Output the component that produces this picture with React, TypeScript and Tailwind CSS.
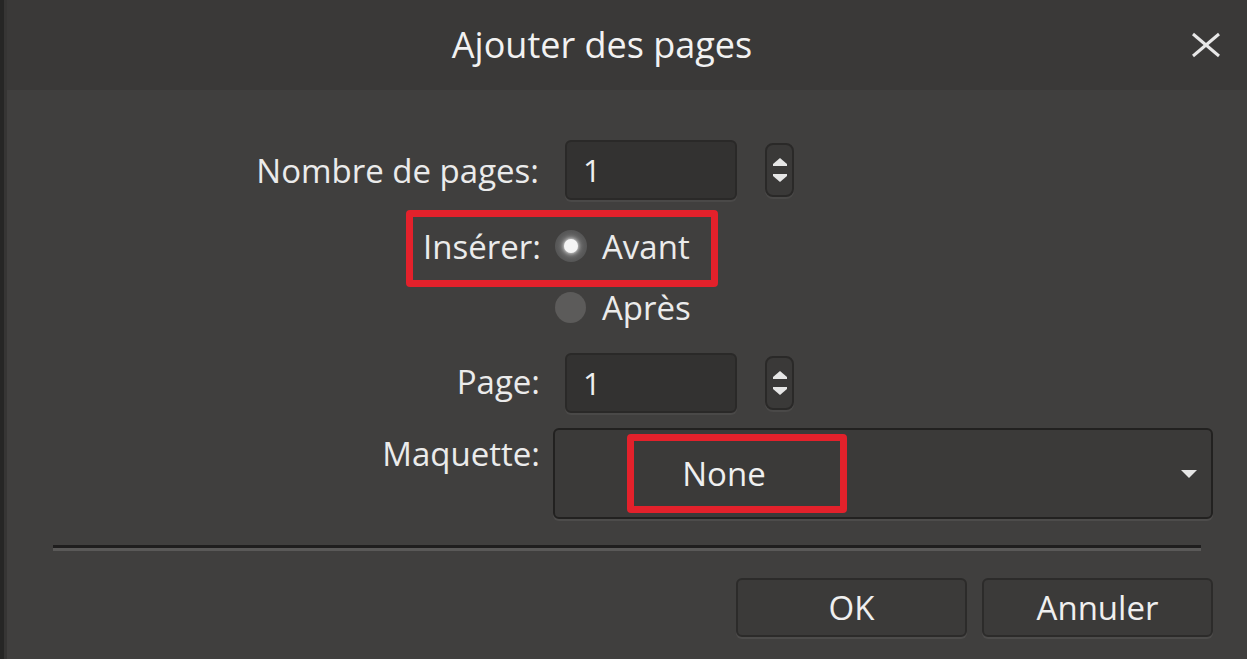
import React from "react";

function Spinner() {
  return (
    <div className="ml-[28px] mt-[3px] flex h-[54px] w-[29px] flex-col items-center justify-center gap-[8px] rounded-[8px] border-2 border-[#2a2928] bg-[#3a3938] shadow-[0_2px_0_#4a4948]">
      <svg width="14" height="8" viewBox="0 0 14 8">
        <polygon points="7,0 14,6 0,6" fill="#e6e6e6" />
        <rect x="0" y="6" width="14" height="2" fill="#e6e6e6" />
      </svg>
      <svg width="14" height="8" viewBox="0 0 14 8">
        <rect x="0" y="0" width="14" height="2" fill="#e6e6e6" />
        <polygon points="0,2 14,2 7,8" fill="#e6e6e6" />
      </svg>
    </div>
  );
}

function NumberInput({ value }: { value: string }) {
  return (
    <div className="flex h-[60px] w-[172px] items-center rounded-[6px] border-2 border-[#2a2928] bg-[#333231] pl-[16px] shadow-[0_2px_0_#4a4948]">
      <span className="text-[31px] leading-none text-[#efefef]">{value}</span>
    </div>
  );
}

export default function App() {
  return (
    <div
      className="relative h-[659px] w-[1247px] overflow-hidden bg-[#403f3e] text-[#ebebeb]"
      style={{ fontFamily: '"Open Sans", "Noto Sans", sans-serif' }}
    >
      <div className="flex h-full">
        <div className="w-[4px] bg-[#262625]" />
        <div className="w-[3px] bg-[#363534]" />
        <div className="flex flex-1 flex-col">
          {/* Title bar */}
          <div className="flex h-[90px] items-center bg-[#3a3938]">
            <div className="flex flex-1 justify-center pl-[8px]">
              <span className="text-[36px] leading-none text-[#f2f2f2]">Ajouter des pages</span>
            </div>
            <div className="mr-[24px] flex h-[30px] w-[34px] items-center justify-center">
              <svg width="32" height="26" viewBox="0 0 32 26">
                <line x1="3" y1="2" x2="29" y2="24" stroke="#e8e8e8" strokeWidth="3" />
                <line x1="29" y1="2" x2="3" y2="24" stroke="#e8e8e8" strokeWidth="3" />
              </svg>
            </div>
          </div>

          {/* Body */}
          <div className="flex flex-col">
            {/* Row 1 */}
            <div className="mt-[50px] flex h-[60px] items-start">
              <div className="flex h-[60px] w-[532px] items-center justify-end">
                <span className="text-[33px] leading-none">Nombre de pages:</span>
              </div>
              <div className="ml-[26px] flex items-start">
                <NumberInput value="1" />
                <Spinner />
              </div>
            </div>

            {/* Row 2 */}
            <div className="relative mt-[28px] flex h-[36px] items-center">
              <div className="flex w-[534px] justify-end">
                <span className="text-[33px] leading-none">Insérer:</span>
              </div>
              <div className="ml-[14px] flex items-center">
                <div className="flex h-[32px] w-[32px] items-center justify-center rounded-full bg-[radial-gradient(circle,#8a8a8a_0%,#5a5a5a_60%,#4a4a4a_100%)]">
                  <div className="h-[14px] w-[14px] rounded-full bg-[#f4f4f4] shadow-[0_0_4px_#ffffff]" />
                </div>
                <span className="ml-[15px] text-[33px] leading-none">Avant</span>
              </div>
              <div className="pointer-events-none absolute left-[399px] top-[-18px] h-[77px] w-[312px] rounded-[4px] border-[7px] border-[#e3212b]" />
            </div>

            {/* Row 3 */}
            <div className="mt-[25px] flex h-[36px] items-center">
              <div className="w-[534px]" />
              <div className="ml-[14px] flex items-center">
                <div className="h-[31px] w-[31px] rounded-full bg-[#5c5b5a]" />
                <span className="ml-[16px] text-[33px] leading-none">Après</span>
              </div>
            </div>

            {/* Row 4 */}
            <div className="mt-[28px] flex h-[60px] items-start">
              <div className="flex h-[56px] w-[533px] items-center justify-end">
                <span className="text-[33px] leading-none">Page:</span>
              </div>
              <div className="ml-[25px] flex items-start">
                <NumberInput value="1" />
                <Spinner />
              </div>
            </div>

            {/* Row 5 */}
            <div className="mt-[15px] flex items-start">
              <div className="flex h-[50px] w-[533px] items-center justify-end">
                <span className="text-[33px] leading-none">Maquette:</span>
              </div>
              <div className="relative ml-[13px] flex h-[91px] w-[660px] items-center rounded-[6px] border-2 border-[#222120] bg-[#3b3a39] shadow-[0_2px_0_#4d4c4b]">
                <div className="flex flex-1 justify-center pr-[318px]">
                  <span className="text-[33px] leading-none text-[#efefef]">None</span>
                </div>
                <svg className="absolute right-[14px] top-[40px]" width="16" height="8" viewBox="0 0 16 8">
                  <polygon points="0,0 16,0 8,8" fill="#e6e6e6" />
                </svg>
                <div className="pointer-events-none absolute left-[72px] top-[4px] h-[79px] w-[220px] rounded-[4px] border-[7px] border-[#e3212b]" />
              </div>
            </div>

            {/* Separator */}
            <div className="ml-[46px] mt-[26px] w-[1148px]">
              <div className="h-[3px] bg-[#1f1e1e]" />
              <div className="h-[3px] bg-[#5a5958]" />
            </div>

            {/* Buttons */}
            <div className="mt-[27px] flex justify-end gap-[15px] pr-[34px]">
              <button className="flex h-[59px] w-[231px] items-center justify-center rounded-[6px] border-2 border-[#2c2b2a] bg-[#3b3a39] shadow-[0_2px_0_#4d4c4b]">
                <span className="text-[33px] leading-none text-[#efefef]">OK</span>
              </button>
              <button className="flex h-[59px] w-[231px] items-center justify-center rounded-[6px] border-2 border-[#2c2b2a] bg-[#3b3a39] shadow-[0_2px_0_#4d4c4b]">
                <span className="text-[33px] leading-none text-[#efefef]">Annuler</span>
              </button>
            </div>
          </div>
        </div>
      </div>
    </div>
  );
}
